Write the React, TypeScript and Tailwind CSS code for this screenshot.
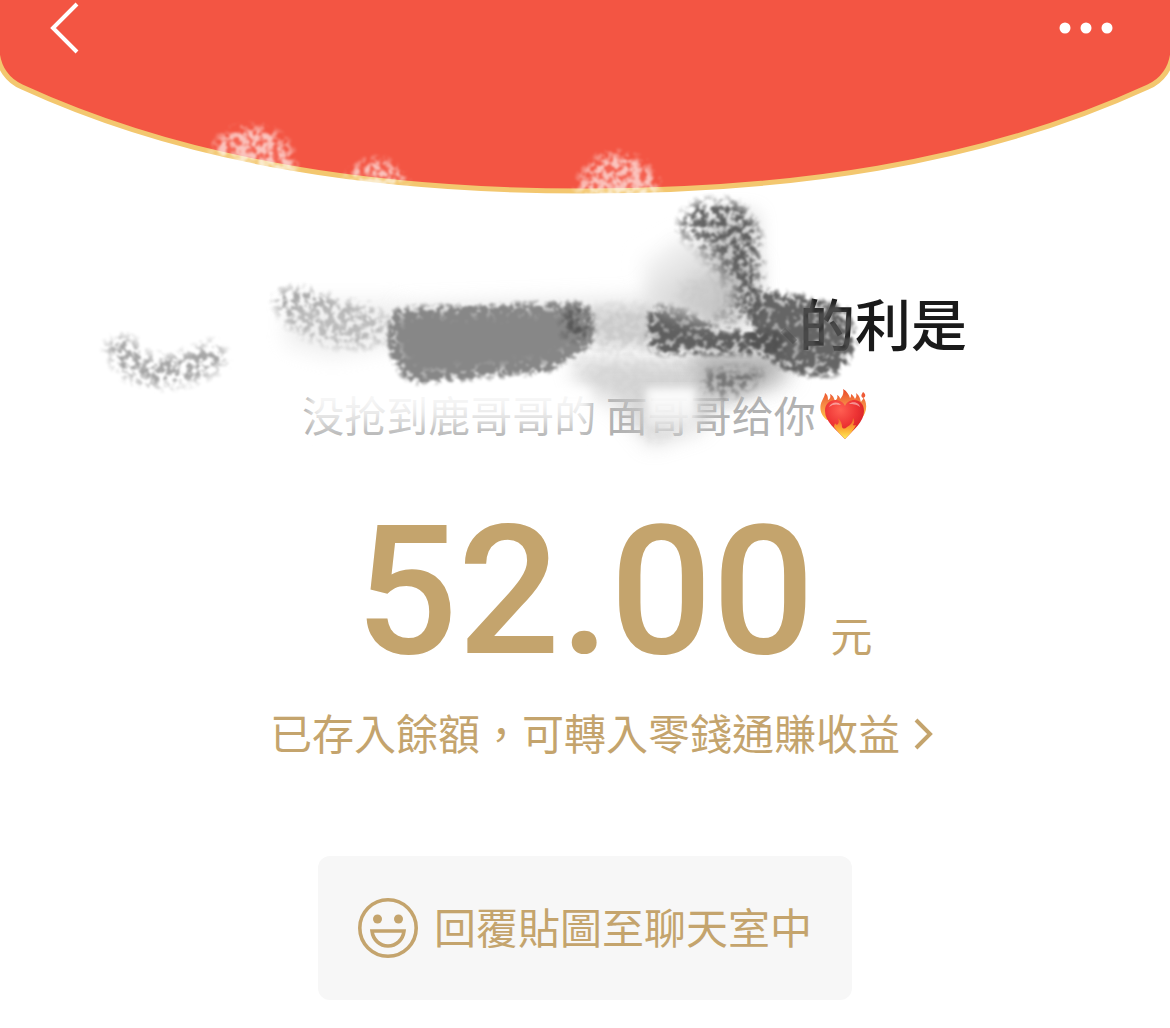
import type { ReactNode } from "react";

type BrushFilterProps = {
  id: string;
  color: string;
  seed: number;
  blur?: number;
  speckle?: number;
  fill?: number;
  cut?: number;
};

// Turns any shape into a dry-brush mark: solid in the middle, speckled at the rim
const BrushFilter = ({
  id,
  color,
  seed,
  blur = 8,
  speckle = 2.4,
  fill = 1,
  cut = -0.6,
}: BrushFilterProps) => (
  <filter
    id={id}
    x="-50%"
    y="-80%"
    width="200%"
    height="260%"
    colorInterpolationFilters="sRGB"
  >
    <feGaussianBlur in="SourceAlpha" stdDeviation={blur} result="soft" />
    <feTurbulence
      type="fractalNoise"
      baseFrequency="0.15"
      numOctaves={3}
      seed={seed}
    />
    <feColorMatrix
      values="0 0 0 0 0  0 0 0 0 0  0 0 0 0 0  0 0 0 4 -1.5"
      result="grain"
    />
    <feComposite
      in="soft"
      in2="grain"
      operator="arithmetic"
      k1={speckle}
      k2={fill}
      k4={cut}
    />
    <feGaussianBlur stdDeviation="0.8" result="mask" />
    <feFlood floodColor={color} />
    <feComposite in2="mask" operator="in" />
  </filter>
);

const BrushMarks = () => (
  <svg
    className="pointer-events-none absolute top-0 left-1/2 z-10 h-[480px] w-[1170px] -translate-x-1/2"
    viewBox="0 0 1170 480"
    fill="none"
    aria-hidden="true"
  >
    <defs>
      <BrushFilter id="chalk" color="#ffffff" seed={4} blur={8} speckle={1.2} fill={0.5} cut={-0.35} />
      <BrushFilter id="dust" color="#777777" seed={9} blur={8} speckle={1.5} fill={0.1} cut={-0.2} />
      <BrushFilter id="slate" color="#878787" seed={2} fill={1.8} cut={-0.8} />
      <BrushFilter id="smoke" color="#4c4c4c" seed={7} blur={7} speckle={1.1} fill={0.25} cut={-0.22} />
      <BrushFilter id="coal" color="#505050" seed={5} speckle={2} fill={1.2} cut={-0.6} />
      <BrushFilter id="fog" color="#c8c8c8" seed={3} blur={10} speckle={0.6} fill={1} cut={-0.3} />
      <filter id="haze" x="-50%" y="-80%" width="200%" height="260%">
        <feGaussianBlur stdDeviation="10" />
      </filter>
      <filter id="feather">
        <feGaussianBlur stdDeviation="5" />
      </filter>
      <linearGradient id="cloud" x1="655" y1="235" x2="715" y2="315" gradientUnits="userSpaceOnUse">
        <stop offset="0" stopColor="#fff" />
        <stop offset="0.4" stopColor="#e6e6e6" />
        <stop offset="1" stopColor="#c2c2c2" />
      </linearGradient>
      <linearGradient id="wash" x1="0" y1="392" x2="0" y2="436" gradientUnits="userSpaceOnUse">
        <stop offset="0" stopColor="#fff" stopOpacity="0.95" />
        <stop offset="0.5" stopColor="#fff" stopOpacity="0.75" />
        <stop offset="1" stopColor="#fff" stopOpacity="0.05" />
      </linearGradient>
    </defs>

    {/* chalk on the red flap */}
    <g filter="url(#chalk)" opacity="0.65" fill="#fff">
      <path d="M208 156q6-28 42-30 34 0 44 28l6 36-70-14z" />
      <path d="M338 186q14-28 38-28 24 2 36 30l-30 10z" />
      <path d="M574 200q4-46 42-48 40 2 46 46l-40 8z" />
    </g>

    {/* thin dust on the left */}
    <path
      d="M118 338q8 34 40 34 36 0 64-22"
      stroke="#777"
      strokeWidth="28"
      filter="url(#dust)"
      opacity="0.65"
    />
    <path
      d="M274 290q34-4 60 10l50 10v34q-54 6-70-6-36-8-40-48z"
      fill="#777"
      filter="url(#dust)"
      opacity="0.7"
    />
    <path d="M285 300L400 300V345L330 358 285 345z" fill="#ddd" filter="url(#haze)" opacity="0.45" />

    {/* hazy layer behind the dark strokes */}
    <path d="M400 306L640 298 680 250 760 260 750 340 400 340z" fill="#ccc" filter="url(#haze)" opacity="0.5" />
    <path d="M570 362H790L792 382 720 400 700 430 650 446 620 408 580 388z" fill="#c4c4c4" filter="url(#haze)" opacity="0.6" />
    <path d="M550 356H785L750 396 690 424 646 446 632 400z" fill="#ccc" filter="url(#fog)" opacity="0.45" />
    <path d="M590 306h70v44h-70z" fill="#ccc" filter="url(#fog)" opacity="0.9" />
    <path d="M690 350h100l-16 34-40 12-30-8z" fill="#999" filter="url(#haze)" opacity="0.6" />
    <path d="M704 368h66l-16 18-28 14-24-8z" fill="#777" filter="url(#smoke)" opacity="0.6" />

    {/* main strokes */}
    <path d="M392 310L586 304 594 342 548 370 408 382 390 350z" fill="#888" filter="url(#slate)" />
    <path d="M562 306h32v34h-32z" fill="#555" filter="url(#smoke)" opacity="0.8" />
    <path d="M650 306l30 0 40 26h64v20h-134z" fill="#555" filter="url(#coal)" opacity="0.9" />
    <path d="M704 214h52v96h-44z" fill="#999" filter="url(#haze)" opacity="0.5" />
    <path d="M684 206q32-12 56-4 24 16 22 60v58h-54q0-66-32-84z" fill="#555" filter="url(#smoke)" opacity="0.85" />
    <path d="M640 262l44-26 36 30 14 44-20 12-56-16z" fill="url(#cloud)" filter="url(#haze)" />
    <path d="M680 276h56v42l-56-8z" fill="#c8c8c8" filter="url(#fog)" opacity="0.7" />
    <path d="M752 290l54 8 42 12 8 40-22 26-42-4-42-26z" fill="#555" filter="url(#coal)" opacity="0.88" />
    <path d="M783 330l12 12" stroke="#3c3c3c" strokeWidth="6" opacity="0.35" />

    {/* white wash over the message */}
    <path
      d="M310 388H590V438H310zM646 388H696V440H646z"
      fill="url(#wash)"
      filter="url(#feather)"
    />
  </svg>
);

const BurningHeart = () => (
  <svg className="ml-1 h-[52px] w-12" viewBox="0 0 48 52" role="img" aria-label="❤️‍🔥">
    <defs>
      <linearGradient id="flame" x1="0" y1="0" x2="0" y2="1">
        <stop offset="0" stopColor="#ea4628" />
        <stop offset="0.5" stopColor="#f58a45" />
        <stop offset="1" stopColor="#ffc648" />
      </linearGradient>
      <radialGradient id="heart" cx="0.4" cy="0.25" r="0.8">
        <stop offset="0" stopColor="#ff5f52" />
        <stop offset="0.5" stopColor="#ee3535" />
        <stop offset="1" stopColor="#cc1620" />
      </radialGradient>
      <linearGradient id="tongue" x1="0" y1="0" x2="0" y2="1">
        <stop offset="0" stopColor="#f0602e" />
        <stop offset="0.55" stopColor="#fcae34" />
        <stop offset="1" stopColor="#ffee5a" />
      </linearGradient>
    </defs>
    <path
      d="M7 32C0 27-1 19 2 13c1-3 3-5 3-8 3 2 3 5 3 7 2-1 3-3 2-6 4 2 4 5 5 7 2-2 3-3 2-6 2 1 3 2 3 4 3-3 4-7 3-10 4 2 6 6 7 9 1-1 1-2 1-4 2 1 3 3 4 5 1-2 2-3 1-6 4 3 4 6 5 9 1-2 3-3 2-5 5 6 4 16-2 22z"
      fill="url(#flame)"
    />
    <path d="M43 10c-3-2-1-4 0-6 3 2 3 5 0 6z" fill="#ee5a36" />
    <path
      d="M25 18C21 9 5 10 5 23c0 11 11 18 20 28 9-10 19-17 19-28 0-13-15-14-19-5z"
      fill="url(#heart)"
    />
    <path d="M9 19c2-5 9-6 12-2-5-1-8-1-12 2zM29 16c3-3 10-2 11 3-4-3-7-3-11-3z" fill="#fff" opacity="0.45" />
    <path
      d="M25 51c-4-4-8-8-11-12 0-2 1-3 1-4 1 2 2 2 3 1 1-2 1-3 0-6 3 3 4 6 4 9 1 2 3 2 5 0 4-2 6-5 6-9 2 3 1 5 0 7 1 1 2 0 3 0-2 5-7 10-11 14z"
      fill="url(#tongue)"
    />
  </svg>
);

const SmileIcon = () => (
  <svg className="size-[60px]" viewBox="0 0 60 60" fill="none" aria-hidden="true">
    <circle cx="30" cy="30" r="28.200" stroke="currentColor" strokeWidth="3.600" />
    <circle cx="19.500" cy="21" r="4.500" fill="currentColor" />
    <circle cx="40.500" cy="21" r="4.500" fill="currentColor" />
    <path d="M14 33h32c-1 9-8 15-16 15s-15-6-16-15z" stroke="currentColor" strokeWidth="3.600" />
  </svg>
);

// Keeps the middle item on the page centre and lets the last one hang to its right
const CenteredRow = ({ children }: { children: ReactNode }) => (
  <div className="grid w-full grid-cols-[1fr_auto_1fr]">
    <span />
    {children}
  </div>
);

export default function App() {
  return (
    <div className="relative min-h-screen overflow-hidden bg-white pb-7 font-['Noto_Sans_CJK_TC',sans-serif] text-[#c4a46d]">
      <header className="relative h-[194px]">
        <svg
          className="absolute inset-0 size-full"
          viewBox="0 0 1170 194"
          preserveAspectRatio="none"
          aria-hidden="true"
        >
          <path
            d="M-3-9V50C-2 68 8 81 22 87C192 165 385 191 585 191S978 165 1148 87C1162 81 1172 68 1173 50V-9z"
            fill="#f35543"
            stroke="#f3c76f"
            strokeWidth="5"
          />
        </svg>
        <nav className="relative flex h-14 items-center justify-between px-12 text-white">
          <button type="button" aria-label="返回">
            <svg className="h-14 w-8" viewBox="0 0 32 56" fill="none">
              <path d="M29 4L5 28L29 52" stroke="currentColor" strokeWidth="4" />
            </svg>
          </button>
          <button type="button" aria-label="更多">
            <svg className="h-14 w-16" viewBox="0 0 64 56" fill="currentColor">
              <circle cx="7" cy="28" r="5.500" />
              <circle cx="28" cy="28" r="5.500" />
              <circle cx="49" cy="28" r="5.500" />
            </svg>
          </button>
        </nav>
      </header>

      <main className="flex flex-col items-center">
        <h1 className="mt-24 w-full max-w-[764px] text-right text-[56px] leading-[64px] font-medium text-[#1a1a1a]">
          的利是
        </h1>

        <p className="mt-8 flex items-center font-['Noto_Sans_CJK_SC',sans-serif] text-[42px] leading-[56px] whitespace-nowrap text-[#b2b2b2]">
          没抢到鹿哥哥的 面哥哥给你
          <BurningHeart />
        </p>

        <div className="mt-[62px] w-full">
          <CenteredRow>
            <strong className="font-['Roboto',sans-serif] text-[180px] leading-[176px] font-medium">
              52.00
            </strong>
            <span className="ml-4 self-end text-[42px] leading-[92px]">元</span>
          </CenteredRow>
        </div>

        <a href="#balance" className="mt-6 block w-full text-[42px] leading-[56px]">
          <CenteredRow>
            <span>已存入餘額，可轉入零錢通賺收益</span>
            <svg className="ml-3 h-14 w-7" viewBox="0 0 28 56" fill="none" aria-hidden="true">
              <path d="M4 16L18 30L4 44" stroke="currentColor" strokeWidth="4" />
            </svg>
          </CenteredRow>
        </a>

        <button
          type="button"
          className="mt-24 flex h-36 items-center gap-4 rounded-xl bg-[#f7f7f7] px-10 text-[42px] leading-[56px]"
        >
          <SmileIcon />
          <span className="pb-1">回覆貼圖至聊天室中</span>
        </button>
      </main>

      <BrushMarks />
    </div>
  );
}
